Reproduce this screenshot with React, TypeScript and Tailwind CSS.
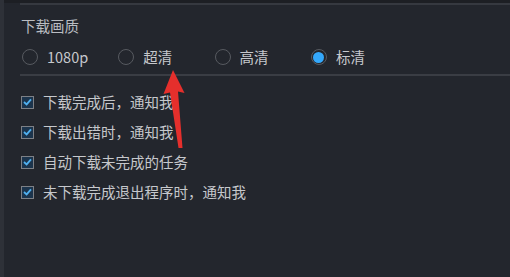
import React from "react";

const qualities = [
  { label: "1080p", checked: false },
  { label: "超清", checked: false },
  { label: "高清", checked: false },
  { label: "标清", checked: true },
];

const notices = [
  "下载完成后，通知我",
  "下载出错时，通知我",
  "自动下载未完成的任务",
  "未下载完成退出程序时，通知我",
];

function Radio({ checked }: { checked: boolean }) {
  return (
    <span className="w-[16px] h-[16px] rounded-full border border-[#575a60] flex items-center justify-center shrink-0">
      {checked && <span className="w-[11px] h-[11px] rounded-full bg-[#34a8fb]" />}
    </span>
  );
}

function Check() {
  return (
    <span className="w-[13px] h-[13px] border border-[#7d8086] bg-[#1c344c] flex items-center justify-center shrink-0">
      <svg width="9" height="8" viewBox="0 0 9 8" fill="none">
        <path d="M1 4 L3.6 6.4 L8 1.3" stroke="#4fb0f0" strokeWidth="1.8" />
      </svg>
    </span>
  );
}

export default function App() {
  return (
    <div
      className="relative w-[510px] h-[277px] overflow-hidden bg-[#23262d] flex"
      style={{ fontFamily: '"Noto Sans CJK SC", "Noto Sans", sans-serif' }}
    >
      <div className="w-[4px] bg-[#2e3138] shrink-0" />
      <div className="flex-1 flex flex-col">
        <div className="h-[3px] bg-[#1d1f24]" />
        <div className="h-[2px] ml-[16px] bg-[#363940]" />

        <p className="mt-[11px] ml-[17px] text-[14.5px] leading-[20px] text-[#babdc2]">下载画质</p>

        <div className="mt-[11px] ml-[18px] flex h-[20px]">
          {qualities.map((q) => (
            <div key={q.label} className="w-[96.3px] flex items-center gap-[9px]">
              <Radio checked={q.checked} />
              <span className="text-[14.5px] leading-[20px] text-[#c6c8cc]">{q.label}</span>
            </div>
          ))}
        </div>

        <div className="mt-[7px] ml-[16px] h-[2px] bg-[#3a3d44]" />

        <div className="mt-[16px] ml-[17px] flex flex-col gap-[10px]">
          {notices.map((n) => (
            <div key={n} className="flex items-center gap-[9px] h-[20px]">
              <Check />
              <span className="text-[14.5px] leading-[20px] text-[#c6c8cc]">{n}</span>
            </div>
          ))}
        </div>
      </div>

      {/* red annotation arrow */}
      <svg className="absolute inset-0 pointer-events-none" width="510" height="277">
        <polygon
          points="173,70 184.5,93 178,91.5 182.5,148 178.5,148 170,92.5 163.5,94"
          fill="#e52f2c"
        />
      </svg>
    </div>
  );
}
